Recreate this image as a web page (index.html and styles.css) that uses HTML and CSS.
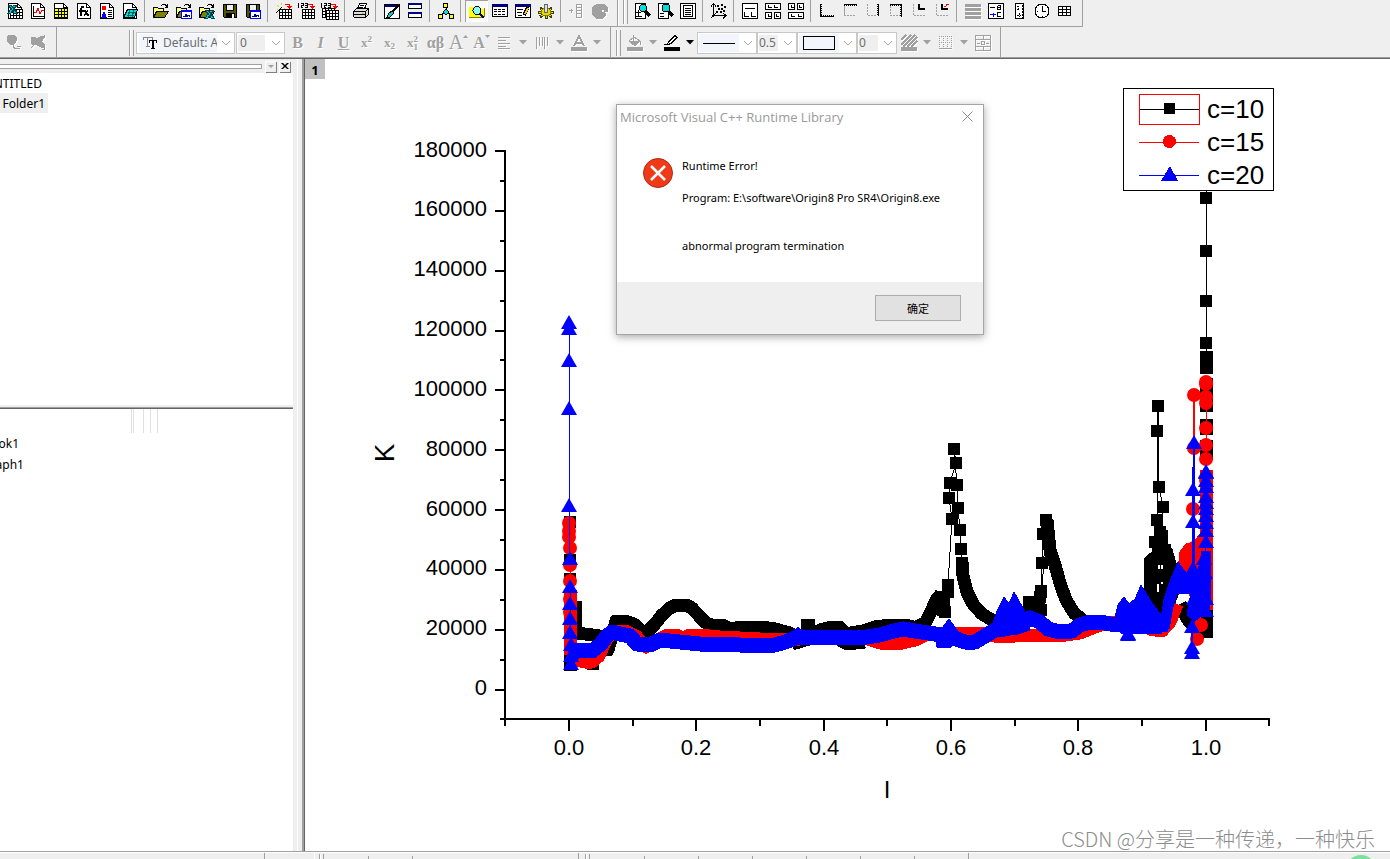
FILE: index.html
```html
<!DOCTYPE html>
<html lang="en">
<head>
<meta charset="utf-8">
<title>Origin 8</title>
<link rel="stylesheet" href="styles.css">
</head>
<body>
<svg class="defs" aria-hidden="true">
  <symbol id="sheet" viewBox="0 0 16 16"><path d="M1.500 .500h9l4 4v11h-13z" fill="#fff"/><path d="M10.500 .500v4h4"/></symbol>
  <symbol id="grid" viewBox="0 0 16 16"><path d="M3.500 6.500h12v9h-12zM3 9.500h12M3 12.500h12M6.500 6v9M9.500 6v9M12.500 6v9" fill="#fff"/></symbol>
  <symbol id="folder" viewBox="0 0 16 16"><path d="M.500 14V4.500h4l1 1h5v3" fill="#ffff80"/><path d="M.500 14.500l3-6h12l-4 6z" fill="#808000"/><path d="M8 2.500l2-1h2l2 2M14.500 1v3h-3"/></symbol>
  <symbol id="disk" viewBox="0 0 16 16"><path d="M1.500 1.500h13v13h-12l-1-1z" fill="#555500"/><path d="M4.500 1.500h7v6h-7z" fill="#efefef"/><path d="M4 10h8v4H4z" fill="#000"/><path d="M10 11h1v3h-1z" fill="#fff" stroke="#fff"/></symbol>
  <symbol id="xl" viewBox="0 0 16 16"><path d="M1 2h3l6 8H7zM7 2h3L4 10H1z" fill="#00d0e0" stroke="#004850"/></symbol>
  <symbol id="wave" viewBox="0 0 16 16"><path d="M5.500 7.500h10v8h-10z" fill="#fff" stroke="#00f"/><path d="M5 8h11" stroke="#00f" stroke-width="2"/><path d="M7 13h2v-2h1v2h1v-1h2v1h1" stroke="#000080"/></symbol>
  <symbol id="down" viewBox="0 0 8 5"><path d="M0 0h8L4 4.500z" fill="currentColor" stroke="none"/></symbol>
  <symbol id="chev" viewBox="0 0 10 6"><path d="M1 1l4 4 4-4" fill="none" stroke="#a8a8a8"/></symbol>
  <symbol id="redarrow" viewBox="0 0 16 16"><path d="M9 1.500h4v2" stroke="red"/><path d="M10 3h6l-3 3z" fill="red" stroke="none"/></symbol>
</svg>

<header class="toolbars">
  <div class="row row-main">
    <div class="bar bar-standard">
      <div class="group">
        <button class="tool" aria-label="New Excel"><svg class="ic" viewBox="0 0 16 16"><use href="#sheet"/><use href="#grid"/><use href="#xl"/></svg></button>
        <button class="tool" aria-label="New Graph"><svg class="ic" viewBox="0 0 16 16"><use href="#sheet"/><path d="M3.500 3v10h10"/><path d="M4 9l2 1 2-5 2 6 2-4 2 1" stroke="red"/></svg></button>
        <button class="tool" aria-label="New Worksheet"><svg class="ic" viewBox="0 0 16 16"><use href="#sheet"/><path d="M1.500 5.500h13v9h-13z" fill="#ff0"/><path d="M2 8.500h12M2 11.500h12M5.500 5v9M8.500 5v9M11.500 5v9"/></svg></button>
        <button class="tool" aria-label="New Function"><svg class="ic" viewBox="0 0 16 16"><use href="#sheet"/><path d="M8 4H6L5 6v7M3 7.500h5" stroke-width="2"/><path d="M8 7l4 6M12 7l-4 6M9 7l4 6"/></svg></button>
        <button class="tool" aria-label="New Layout"><svg class="ic" viewBox="0 0 16 16"><use href="#sheet"/><path d="M3 3h4v4H3z" fill="red" stroke="none"/><path d="M3 14l2-5 2 5z" fill="#00f" stroke="#00f"/><path d="M9 7.500h4M9 9.500h4M9 11.500h4M9 13.500h4"/></svg></button>
        <button class="tool" aria-label="New Notes"><svg class="ic" viewBox="0 0 16 16"><use href="#sheet"/><path d="M5.500 6.500h10l-3 8h-11z" fill="#00e0e0"/><path d="M6 9h8M5 12h7M8 7l-2 7M12 7l-2 7" stroke="#066"/></svg></button>
      </div>
      <div class="group">
        <button class="tool" aria-label="Open"><svg class="ic" viewBox="0 0 16 16"><use href="#folder"/></svg></button>
        <button class="tool" aria-label="Open Template"><svg class="ic" viewBox="0 0 16 16"><use href="#folder"/><use href="#wave"/></svg></button>
        <button class="tool" aria-label="Open Excel"><svg class="ic" viewBox="0 0 16 16"><use href="#folder"/><use href="#xl" x="5" y="5"/></svg></button>
        <button class="tool" aria-label="Save"><svg class="ic" viewBox="0 0 16 16"><use href="#disk"/></svg></button>
        <button class="tool" aria-label="Save Template"><svg class="ic" viewBox="0 0 16 16"><use href="#disk"/><use href="#wave"/></svg></button>
      </div>
      <div class="group">
        <button class="tool" aria-label="Import Wizard"><svg class="ic" viewBox="0 0 16 16"><use href="#grid"/><path d="M0 10l6-6"/><path d="M1 2l2 2M5.500 0v2M1 6h1M8 5h1" stroke="#d8d800"/><use href="#redarrow"/></svg></button>
        <button class="tool" aria-label="Import Single ASCII"><svg class="ic" viewBox="0 0 16 16"><use href="#grid"/><path d="M-.500 0v5M2 .500h2v2h-2v2h2M6 .500h2v4H6M6 2.500h2"/><use href="#redarrow"/></svg></button>
        <button class="tool" aria-label="Import Multiple ASCII"><svg class="ic" viewBox="0 0 16 16"><use href="#grid" x="-3" y="-1"/><use href="#grid" x="1" y="1"/><path d="M-.500 0v5M2 .500h2v2h-2v2h2M6 .500h2v4H6M6 2.500h2"/><use href="#redarrow"/></svg></button>
      </div>
      <div class="group">
        <button class="tool" aria-label="Print"><svg class="ic" viewBox="0 0 16 16"><path d="M4.500 6l2-5.500h7l-2 5.500M7 2.500h4M6 4.500h4" fill="#fff"/><path d="M.500 8.500l3-3h12v6l-3 3h-11l-1-1z" fill="#ddd"/><path d="M.500 8.500h12v6M12.500 8.500l3-3M1 11.500h11"/><path d="M9 10h2" stroke="#cc0"/></svg></button>
      </div>
      <div class="group">
        <button class="tool" aria-label="Duplicate"><svg class="ic" viewBox="0 0 16 16"><path d="M.500 1.500h15v14H.500z" fill="#fff"/><path d="M1 3h13" stroke="#000080" stroke-width="2"/><path d="M15 2L8 9" stroke-width="2"/><path d="M8 8l2 2-4 4H3l2-4z" fill="#0cc"/></svg></button>
        <button class="tool" aria-label="Refresh"><svg class="ic" viewBox="0 0 16 16"><path d="M1.500 .500h13v5h-13zM1.500 9.500h13v5h-13z" fill="#fff"/><path d="M1 1h14M1 10h14" stroke="#000080" stroke-width="2"/></svg></button>
      </div>
      <div class="group">
        <button class="tool" aria-label="Custom Routine"><svg class="ic" viewBox="0 0 16 16"><path d="M8 4v4M8 8l-5 4M8 8l5 4M8 8v4"/><path d="M5.500 .500h4v4h-4zM.500 11.500h4v4h-4zM11.500 11.500h4v4h-4z" fill="#ff0"/><path d="M8 6l3 3-3 3-3-3z" fill="#0dd"/></svg></button>
      </div>
      <div class="group">
        <button class="tool pressed" aria-label="Project Explorer"><svg class="ic" viewBox="0 0 16 16"><path d="M0 14V4h5l1 2h9v8z" fill="#ff0" stroke="none"/><path d="M0 14.500h15M15 5v9" stroke="#808000"/><circle cx="8" cy="7.500" r="4" fill="#8ff"/><path d="M11 11l4 4" stroke="#000080" stroke-width="2"/></svg></button>
        <button class="tool" aria-label="Results Log"><svg class="ic" viewBox="0 0 16 16"><path d="M.500 1.500h15v12H.500z" fill="#fff"/><path d="M0 2h16" stroke="#000080" stroke-width="3"/><path d="M2 6.500h12M2 8.500h12M2 11.500h12" stroke-dasharray="3 1"/></svg></button>
        <button class="tool" aria-label="Command Window"><svg class="ic" viewBox="0 0 16 16"><path d="M.500 1.500h15v13H.500z" fill="#fff"/><path d="M0 2h16" stroke="#000080" stroke-width="3"/><path d="M2 6.500h6M2 9.500h5M3 12.500h4"/><path d="M13 4l-4 8" stroke="#000" stroke-width="4"/><path d="M13 5l-3 6" stroke="#ffd000" stroke-width="2"/></svg></button>
        <button class="tool" aria-label="Code Builder"><svg class="ic" viewBox="0 0 16 16"><path d="M8 3v13M0 9h16M2 5l12 9M14 5L2 14" stroke="#404000" stroke-width="3"/><path d="M8 5v10M1 9h14M3 6l10 7M13 6L3 13" stroke="#e8d800"/><ellipse cx="8" cy="9" rx="5" ry="3.500" fill="#e8d800" stroke="#808000"/><path d="M6.500 1.500h3v8h-3z" fill="#ddd" stroke="#666"/></svg></button>
      </div>
      <div class="group">
        <button class="tool off" aria-label="Add New Column"><svg class="ic" viewBox="0 0 16 16"><path d="M0 7.500h4M2 5.500v4M7.500 1.500h5v13h-5zM8 4.500h4M8 7.500h4M8 10.500h4"/></svg></button>
        <button class="tool off" aria-label="Rotate"><svg class="ic" viewBox="0 0 16 16"><path d="M15 8V4l-3-3H5L0 5v6l4 4h7l2-2v-3l-4-1V6h3v2z" fill="#a0a0a0"/></svg></button>
      </div>
    </div>
    <div class="bar bar-graph">
      <span class="grip"></span>
      <div class="group">
        <button class="tool" aria-label="Zoom In"><svg class="ic" viewBox="0 0 16 16"><path d="M1.500 .500h10v15h-10z" fill="#fff"/><circle cx="9" cy="5" r="3.500" fill="#0dd"/><path d="M11 8l5 5" stroke-width="3"/><path d="M4.500 7v6M2 9.500h5M2 13h6"/></svg></button>
        <button class="tool" aria-label="Zoom Out"><svg class="ic" viewBox="0 0 16 16"><path d="M1.500 .500h10v15h-10z" fill="#fff"/><circle cx="9" cy="5" r="4" fill="#0dd"/><path d="M12 9l4 4" stroke-width="3"/><path d="M3 10.500h4M3 13h4"/></svg></button>
        <button class="tool" aria-label="Whole Page"><svg class="ic" viewBox="0 0 16 16"><path d="M.500 .500h15v15H.500zM3.500 2.500h9v11h-9z" fill="#fff"/><path d="M5 5.500h6M5 7.500h6M5 9.500h6M5 11.500h6"/></svg></button>
      </div>
      <div class="group">
        <button class="tool" aria-label="Rescale"><svg class="ic" viewBox="0 0 16 16"><path d="M2.500 1v13M0 3.500l2.500-3 2.500 3M1 12.500h13M12 10l3 2.500-3 3M0 15l5-5"/><path d="M6 3h2M10 2h2M13 4h2M7 6h2M10 6h2M12 8h2M5 9h2M9 9h2" stroke-width="2"/></svg></button>
      </div>
      <div class="group">
        <button class="tool" aria-label="Two Panels"><svg class="ic" viewBox="0 0 16 16"><path d="M.500 .500h15v15H.500z" fill="#fff"/><path d="M3 5.500h10M2.500 9v4h4M9.500 9v4h4"/></svg></button>
        <button class="tool" aria-label="Four Panels"><svg class="ic" viewBox="0 0 16 16"><path d="M.500 .500h15v6H.500zM.500 9.500h6v6h-6zM9.500 9.500h6v6h-6z" fill="#fff"/><path d="M3.500 2v2h3M9.500 2v2h3M3.500 11v2h2M11.500 11v2h2"/></svg></button>
        <button class="tool" aria-label="Nine Panels"><svg class="ic" viewBox="0 0 16 16"><path d="M.500 .500h6v6h-6zM9.500 .500h6v6h-6zM.500 9.500h15v6H.500z" fill="#fff"/><path d="M3.500 2v2h2M11.500 2v2h2M3.500 11v2h3M10.500 11v2h3"/></svg></button>
      </div>
      <div class="group">
        <button class="tool" aria-label="Bottom-Left Axes"><svg class="ic" viewBox="0 0 16 16"><path d="M2 1v12h13" stroke-width="2" stroke-dasharray="1 1"/><path d="M1.500 1v12.500H15"/></svg></button>
        <button class="tool" aria-label="Top Axis"><svg class="ic" viewBox="0 0 16 16"><path d="M2.500 3v10" stroke="#a0a0a0"/><path d="M2 12.500h11" stroke="#a0a0a0" stroke-dasharray="2 1"/><path d="M2 1.500h13"/><path d="M2 2.500h13" stroke-dasharray="1 1"/></svg></button>
        <button class="tool" aria-label="Right Axis"><svg class="ic" viewBox="0 0 16 16"><path d="M2.500 1v11.500H12" stroke="#a0a0a0" stroke-dasharray="2 1"/><path d="M13.500 1v12"/><path d="M12.500 1v12" stroke-dasharray="1 1"/></svg></button>
        <button class="tool" aria-label="Box Axes"><svg class="ic" viewBox="0 0 16 16"><path d="M2.500 3v9.500H12" stroke="#a0a0a0" stroke-dasharray="2 1"/><path d="M2 1.500h11.500v12"/><path d="M2 2.500h10.500v11" stroke-dasharray="1 1"/></svg></button>
        <button class="tool" aria-label="Inset Axes"><svg class="ic" viewBox="0 0 16 16"><path d="M2.500 1v11.500H15" stroke="#a0a0a0" stroke-dasharray="2 1"/><path d="M8 1v5h6" stroke-width="2"/></svg></button>
        <button class="tool" aria-label="Inset Graph"><svg class="ic" viewBox="0 0 16 16"><path d="M2.500 1v11.500H15" stroke="#a0a0a0" stroke-dasharray="2 1"/><path d="M8 1v5h6" stroke-width="2"/><path d="M10 4l2-1 1-2h2" stroke="red"/></svg></button>
      </div>
      <div class="group">
        <button class="tool off" aria-label="Merge"><svg class="ic" viewBox="0 0 16 16"><path d="M0 2.500h16M0 6.500h16M0 10.500h16M0 14.500h16" stroke-width="3"/></svg></button>
        <button class="tool" aria-label="New Legend"><svg class="ic" viewBox="0 0 16 16"><path d="M.500 .500h15v15H.500z" fill="#fff"/><path d="M2 4.500h5M9.500 2.500h3v2h-3v2h3v-4M9.500 2.500v4M13 9.500H9.500v4H13"/><path d="M2 11.500h6M5 9.500v4" stroke="#00f"/></svg></button>
        <button class="tool" aria-label="Add Color Scale"><svg class="ic" viewBox="0 0 16 16"><path d="M4.500 .500h8v15h-8z" fill="#fff"/><path d="M6 3h3M6 6.500h3M7.500 5v3M6 12h4M8 10v4M11 2v13" stroke-dasharray="2 1"/></svg></button>
        <button class="tool" aria-label="Date and Time"><svg class="ic" viewBox="0 0 16 16"><circle cx="8" cy="8" r="7" fill="#fff"/><path d="M8 3v5h4M3 8.500h1M8 13v1"/></svg></button>
        <button class="tool" aria-label="New Table"><svg class="ic" viewBox="0 0 16 16"><path d="M1.500 3.500h12v9h-12zM1 6.500h12M1 9.500h12M5.500 3v9M9.500 3v9" fill="#fff"/></svg></button>
      </div>
    </div>
  </div>

  <div class="row row-format">
    <div class="bar bar-mask">
      <button class="tool off" aria-label="Mask Points"><svg class="ic" viewBox="0 0 16 16"><path d="M3 0h4l2 2v4L7 9H3L0 6V2z" fill="#a0a0a0"/><path d="M6 9v3l3 2M10 11h4M9 13h4"/></svg></button>
      <button class="tool off" aria-label="Unmask Points"><svg class="ic" viewBox="0 0 16 16"><path d="M1 2h4l2 2 3-2 4-1v2l-3 4 3 2v4l-3-1-4-2-5-1-1-3z" fill="#a0a0a0"/><path d="M1 13l4-4M12 14h3"/></svg></button>
    </div>
    <div class="bar bar-text">
      <span class="grip"></span>
      <label class="combo combo-font"><span class="well"><svg class="ic" viewBox="0 0 16 16"><path d="M0 2.500h9M4.500 2v9M3 11.500h4M.500 2v3M9.500 2v3" stroke="#888"/><path d="M6 5.500h8M9.500 5v9M8 13.500h4M6.500 5v3M13.500 5v3M10.500 5v9"/></svg><select aria-label="Font"><option>Default: Arial</option></select></span><svg class="chev"><use href="#chev"/></svg></label>
      <label class="combo combo-size"><select aria-label="Font size"><option>0</option></select><svg class="chev"><use href="#chev"/></svg></label>
      <button class="tool off glyph bold">B</button>
      <button class="tool off glyph italic">I</button>
      <button class="tool off glyph under">U</button>
      <button class="tool off glyph small">x<sup>2</sup></button>
      <button class="tool off glyph small">x<sub>2</sub></button>
      <button class="tool off glyph small" aria-label="Super-subscript"><span>x</span><span class="stack"><span>2</span><span>1</span></span></button>
      <button class="tool off glyph">αβ</button>
      <button class="tool off glyph big">A<svg class="tip" viewBox="0 0 5 3"><path d="M0 3h5L2.500 0z"/></svg></button>
      <button class="tool off glyph">A<svg class="tip" viewBox="0 0 5 3"><path d="M0 0h5L2.500 3z"/></svg></button>
      <button class="tool off" aria-label="Align"><svg class="ic" viewBox="0 0 16 16"><path d="M1 2.500h12M1 5.500h8M1 8.500h12M1 11.500h8M1 13.500h12"/></svg></button>
      <button class="drop off" aria-label="Align options"><svg><use href="#down"/></svg></button>
      <button class="tool off" aria-label="Spacing"><svg class="ic" viewBox="0 0 16 16"><path d="M2.500 2v12M5.500 2v9M8.500 2v9M10.500 2v12M13.500 2v9"/></svg></button>
      <button class="drop off" aria-label="Spacing options"><svg><use href="#down"/></svg></button>
      <button class="tool off" aria-label="Font color"><svg class="ic" viewBox="0 0 16 16"><path d="M3 11L8 1l5 10M5 8h6" stroke-width="2"/><path d="M0 14h16" stroke-width="4"/></svg></button>
      <button class="drop off" aria-label="Font color options"><svg><use href="#down"/></svg></button>
    </div>
    <div class="bar bar-style">
      <span class="grip"></span>
      <button class="tool off" aria-label="Fill color"><svg class="ic" viewBox="0 0 16 16"><path d="M2 6l5-4 6 4-5 5zM6 0v6M13 6l1 4"/><path d="M3 6h9l-4 4z" fill="#a0a0a0"/><path d="M0 14h16" stroke-width="4"/></svg></button>
      <button class="drop off" aria-label="Fill color options"><svg><use href="#down"/></svg></button>
      <button class="tool" aria-label="Line color"><svg class="ic" viewBox="0 0 16 16"><path d="M0 9.500h3l2-3 6-6 2 2-6 6-3 1" fill="#fff"/><path d="M0 14h16" stroke-width="4"/></svg></button>
      <button class="drop" aria-label="Line color options"><svg><use href="#down"/></svg></button>
      <button class="combo combo-wide" aria-label="Line style" aria-haspopup="listbox"><span class="well"><svg class="sample" viewBox="0 0 34 16"><path d="M1 8.500h32"/></svg></span><svg class="chev"><use href="#chev"/></svg></button>
      <label class="combo combo-narrow"><select aria-label="Line width"><option>0.5</option></select><svg class="chev"><use href="#chev"/></svg></label>
      <button class="combo combo-wide" aria-label="Border style" aria-haspopup="listbox"><span class="well"><svg class="sample" viewBox="0 0 34 16"><path d="M1.500 1.500h31v13h-31z"/></svg></span><svg class="chev"><use href="#chev"/></svg></button>
      <label class="combo combo-narrow"><select aria-label="Pattern"><option>0</option></select><svg class="chev"><use href="#chev"/></svg></label>
      <button class="tool off" aria-label="Fill pattern"><svg class="ic" viewBox="0 0 16 16"><path d="M0 5l5-5M0 10L10 0M2 12L14 0M6 12l10-10M10 12l6-6" stroke-width="2"/><path d="M0 14h16" stroke-width="4"/></svg></button>
      <button class="drop off" aria-label="Fill pattern options"><svg><use href="#down"/></svg></button>
      <button class="tool off" aria-label="Borders"><svg class="ic" viewBox="0 0 16 16"><path d="M1.500 1v12M5.500 1v12M9.500 1v12M13.500 1v12M1 1.500h13M1 7.500h13" stroke-dasharray="1 1"/><path d="M1 13.500h13"/></svg></button>
      <button class="drop off" aria-label="Border options"><svg><use href="#down"/></svg></button>
      <button class="tool off" aria-label="Merge cells"><svg class="ic" viewBox="0 0 16 16"><path d="M.500 .500h15v15H.500zM0 4.500h16M0 11.500h16M8 0v4M8 12v4M2 8h3M11 8h3M6.500 6.500h3v3h-3z"/></svg></button>
    </div>
  </div>
</header>

<main class="workspace">
  <aside class="explorer">
    <section class="tree">
      <div class="caption"><span class="lines"></span><button aria-label="Menu" class="mini off"><svg viewBox="0 0 8 8"><path d="M1 3h6L4 6z"/></svg></button><button aria-label="Close" class="mini"><svg viewBox="0 0 8 8"><path d="M0 1h2l2 2 2-2h2L5 4l3 3H6L4 5 2 7H0l3-3z"/></svg></button></div>
      <div class="item item-root"><span>UNTITLED</span></div>
      <div class="item item-folder"><span>Folder1</span></div>
    </section>
    <section class="files">
      <div class="columns"><i></i><i></i><i></i><i></i><i></i></div>
      <div class="item item-book"><span>Book1</span></div>
      <div class="item item-graph"><span>Graph1</span></div>
    </section>
  </aside>

  <section class="document">
    <svg class="plot" viewBox="305 59 1085 792" preserveAspectRatio="xMinYMin meet" role="img" aria-label="K against I">
      <defs>
        <marker id="sq" viewBox="-7 -7 14 14" markerWidth="14" markerHeight="14" markerUnits="userSpaceOnUse"><path d="M-6-6H6V6H-6z" fill="#000"/></marker>
        <marker id="ci" viewBox="-7 -7 14 14" markerWidth="14" markerHeight="14" markerUnits="userSpaceOnUse"><circle r="7" fill="red"/></marker>
        <marker id="tr" viewBox="-9 -10 18 18" markerWidth="18" markerHeight="18" markerUnits="userSpaceOnUse"><path d="M-8 5H8L0-9z" fill="#00f"/></marker>
      </defs>

      <g class="axes">
        <path d="M505 150V720M504 719H1270"/>
        <path d="M495 151h10M495 211h10M495 271h10M495 331h10M495 390h10M495 450h10M495 510h10M495 570h10M495 630h10M495 690h10"/>
        <path d="M500 181h5M500 241h5M500 301h5M500 360h5M500 420h5M500 480h5M500 540h5M500 600h5M500 660h5M500 719h5"/>
        <path d="M569 719v12M696 719v12M824 719v12M951 719v12M1078 719v12M1206 719v12"/>
        <path d="M505 719v7M633 719v7M760 719v7M887 719v7M1015 719v7M1142 719v7M1269 719v7"/>
      </g>
      <g class="ticks ticks-y">
        <text x="487" y="157">180000</text><text x="487" y="216">160000</text><text x="487" y="276">140000</text><text x="487" y="336">120000</text><text x="487" y="396">100000</text><text x="487" y="456">80000</text><text x="487" y="516">60000</text><text x="487" y="575">40000</text><text x="487" y="635">20000</text><text x="487" y="695">0</text>
      </g>
      <g class="ticks ticks-x">
        <text x="569" y="755">0.0</text><text x="696" y="755">0.2</text><text x="824" y="755">0.4</text><text x="951" y="755">0.6</text><text x="1078" y="755">0.8</text><text x="1206" y="755">1.0</text>
      </g>
      <text class="axis-name" transform="translate(394 453) rotate(-90)">K</text>
      <text class="axis-name axis-i" x="887" y="798">I</text>

      <g class="series black">
        <path class="dense" d="M570 600V671M575 601V633L585 634 600 636 608 642 608 650 616 621 625 621 634 624 640 630 646 633 655 624 662 615 670 608 676 605 686 605 692 608 700 617 706 623 712 625 722 625 731 629 740 627 762 627 775 629 790 633 795 643"/>
        <path class="dense" d="M587 663h12M792 644l20-6 8-8 12-3 8 0 5 7M835 637l12 7 18-2M845 634l18-3 12-4 15-2 15 0 8 2M915 628l10-5 6-11 5-12 5-6M944 591l-1 25M962 562l1 14 4 16 6 12 9 10 10 6 16 10M1029 600v16M1041 592l-3 16M1047 520l3 30 5 15 5 18 6 17 8 13 10 8 10 5"/>
        <path class="dense" d="M1206 351V374M1206 378v34M1206 419v16M1206 440v20M1206 540v98M1180 604l8 16 10 10 8 4"/>
        <path class="blob" d="M1145 558l7-6 3-22 12 0 0 14 5 5 4 14 6 22-12 30-26 0z"/>
        <path class="link squares" d="M570 522V560L570 579M570 598"/>
        <path class="link squares" d="M948 592V585L952 519 949 498 950 483 956 463 954 449 957 485 958 508 960 530 961 549 962 563"/>
        <path class="link squares" d="M945 612L948 592M1029 602L1041 591 1042 563 1043 534 1046 520 1041 610"/>
        <path class="link squares" d="M1150 575L1155 542 1157 520 1157 431 1158 406 1159 487 1163 507 1160 532 1165 550"/>
        <path class="link squares" d="M1206 185V198L1206 251 1206 301 1206 343 1206 360"/>
        <path class="gaps" d="M1159 565v4M1162 565v4M1158 584v8M1162 582v2"/>
        <path class="fill" d="M801 619h13v12h-13z"/>
      </g>

      <g class="series red">
        <path class="dense" d="M570 590V655M576 660L585 662 592 662 599 656 606 640 612 632 625 631 636 636 646 647 660 639 668 635 676 635 683 638 690 635 700 635 720 637 760 639 800 639 840 636 860 636 880 643 898 644 915 640 930 633 960 633 985 634 1000 637 1030 635 1058 636 1080 633 1095 627 1110 622 1140 622 1150 629 1162 631 1170 622 1177 604"/>
        <path class="blob" d="M1178 570l2-18 6-8 8-2 6-8 8-4 3 28-3 40-18-2z"/>
        <path class="dense" d="M1206 470V610"/>
        <path class="link circles" d="M569 523V531L569 537 570 548 570 565 570 581 570 599 570 612"/>
        <path class="link circles wide" d="M1194 548V395L1194 448 1193 509 1194 580 1201 625 1197 639"/>
        <path class="link circles" d="M1206 382V384L1206 397 1206 403 1206 428 1206 445 1206 459 1206 480"/>
      </g>

      <g class="series blue">
        <path class="dense" d="M571 655L578 650 592 651 600 645 606 637 612 632 620 634 630 636 637 644 650 645 660 640 680 642 700 644 740 645 775 645 785 642 798 637 820 637 860 638 880 635 890 632 903 629 915 631 935 634 948 636 965 642 975 642 985 636 995 630 1005 629 1020 625 1030 618 1040 622 1048 629 1060 632 1072 631 1080 625 1090 622 1100 622 1110 624 1125 624 1155 624 1168 624"/>
        <path class="blob" d="M790 634l8-7 8 7zM935 634l8-7 6-8 10 14-8 14h-14zM991 630l6-19 7-14 5 7 5-12 10 18 6 20-15 5zM1114 622l4-17 6-8 5 7 6-5 6-14 11 18 9 12 0 18h-40zM1160 628l4-29 8-23 6-14 8 11 12 -2 4-20h8l1 50 -2 8-14 12-8-6 4-22h-14l-4 14-4 22z"/>
        <path class="link triangles" d="M569 324V330L569 362 569 410 569 507 570 560 570 588 570 605 570 620 570 634 571 646 571 657 571 665"/>
        <path class="link triangles wide" d="M1192 654V649L1192 628 1198 605 1193 570 1193 523 1193 491 1194 444 1194 600 1206 612"/>
        <path class="link triangles" d="M1206 473V474L1206 482 1206 488 1206 498 1206 504 1206 510 1206 517 1206 524 1206 532 1206 543 1204 560 1205 574 1203 588 1206 600"/>
        <path class="link triangles" d="M1128 635V636"/>
      </g>

      <g class="legend">
        <path class="frame" d="M1123.500 88.500h150v102h-150z"/>
        <path d="M1139 109.500h60" stroke="#000"/><path d="M1139 142.500h60" stroke="red"/><path d="M1139 175.500h60" stroke="#00f"/>
        <path d="M1139.500 94.500h60v30h-60z" stroke="red"/>
        <path d="M1164 103h11v11h-11z" fill="#000"/><circle cx="1169.500" cy="141.500" r="6.500" fill="red"/><path d="M1161 181h17l-8-15z" fill="#00f"/>
        <text x="1207" y="118">c=10</text><text x="1207" y="151">c=15</text><text x="1207" y="184">c=20</text>
      </g>
    </svg>
    <span class="layer">1</span>
    <div class="dialog" role="alertdialog" aria-labelledby="dlg-title">
      <div class="dialog-head"><h1 id="dlg-title">Microsoft Visual C++ Runtime Library</h1><button class="dialog-x" aria-label="Close"><svg viewBox="0 0 11 11"><path d="M.500 .500l10 10M10.500 .500l-10 10"/></svg></button></div>
      <div class="dialog-body">
        <svg class="stop" viewBox="0 0 30 30"><circle cx="15" cy="15" r="14.500" fill="#f03a17" stroke="#a82a16"/><path d="M8 8l14 14M22 8L8 22" stroke="#fff" stroke-width="2.500"/></svg>
        <div class="message"><p>Runtime Error!</p><p>Program: E:\software\Origin8 Pro SR4\Origin8.exe</p><p class="last">abnormal program termination</p></div>
      </div>
      <div class="dialog-foot"><button class="ok">确定</button></div>
    </div>
    <p class="watermark">CSDN @分享是一种传递，一种快乐</p>
  </section>
</main>

<footer class="status"><i class="s265"></i><i class="s50 clear"></i><span class="grip"></span><i class="s45"></i><i class="s45"></i><i class="s166 tall"></i><span class="grip"></span><i class="s53"></i><i class="s53"></i><i class="s53"></i><i class="s53"></i><i class="s53"></i><i class="s53"></i><i class="s53 tall"></i><b class="bubble"></b></footer>
</body>
</html>
```
FILE: styles.css
```css
* { box-sizing: border-box; }
body {
  margin: 0;
  height: 100vh;
  display: flex;
  flex-direction: column;
  overflow: hidden;
  background: #efefef;
  color: #000;
  font: 12px "Noto Sans", "Noto Sans CJK SC", sans-serif;
}
button { border: 0; margin: 0; padding: 0; background: none; color: inherit; font: inherit; }
.defs { position: absolute; width: 0; height: 0; }

/* toolbars */
.toolbars { flex: none; border-bottom: 1px solid #646464; box-shadow: inset 0 -1px #a0a0a0; }
.row { display: flex; }
.row-main { height: 27px; }
.row-format { height: 31px; }
.bar { display: flex; align-items: center; border-right: 1px solid #a0a0a0; }
.row-main .bar { border-bottom: 1px solid #a0a0a0; padding-bottom: 4px; }
.bar-standard { padding: 0 6px 0 3px; }
.bar-graph { padding: 0 6px 0 4px; box-shadow: inset 1px 0 #fff; }
.group { display: flex; align-items: center; }
.group + .group { margin-left: 3px; padding-left: 4px; border-left: 1px solid #a0a0a0; }
.tool { width: 23px; height: 22px; flex: none; display: flex; align-items: center; justify-content: center; }
.pressed { background: #f8f8f8; box-shadow: inset 1px 1px #a0a0a0, inset -1px -1px #fff; }
.ic { width: 16px; height: 16px; fill: none; stroke: #000; shape-rendering: crispEdges; overflow: visible; }
.off { color: #a0a0a0; }
.off .ic { stroke: #a0a0a0; filter: drop-shadow(1px 1px #fff); }
.grip { width: 5px; height: 26px; flex: none; margin: 0 2px 0 1px; border: solid #a0a0a0; border-width: 0 1px; background: linear-gradient(90deg, #fff 1px, #efefef 1px); }
.bar-mask { width: 57px; padding-left: 3px; margin-right: 71px; }
.bar-text { padding-right: 6px; }
.bar-style { padding: 0 6px 0 4px; }
.drop { width: 14px; height: 22px; flex: none; display: flex; align-items: center; justify-content: center; }
.drop svg { width: 8px; height: 5px; }
.combo { height: 22px; flex: none; display: flex; align-items: center; justify-content: space-between; padding: 1px 3px 1px 1px; border: 1px solid #c8c8c8; background: #fff; }
.chev { width: 10px; height: 6px; flex: none; }
.combo-font { width: 99px; margin-right: 1px; padding-left: 2px; }
.combo-size { width: 49px; margin-right: 1px; }
.combo-wide { width: 60px; }
.combo-narrow { width: 40px; }
.well { display: flex; align-items: center; justify-content: center; height: 18px; background: #f2f6fc; }
.combo-font .well { width: 78px; padding-left: 4px; gap: 2px; }
.combo-font select { width: 56px; background: none; }
.combo-wide .well { width: 40px; }
.sample { width: 34px; height: 16px; fill: none; stroke: #000; shape-rendering: crispEdges; }
select { appearance: none; border: 0; margin: 0; padding: 0 0 0 2px; height: 16px; background: #efefef; color: #6d6d6d; font: 12px/16px "Noto Sans", sans-serif; overflow: hidden; }
.combo-size select { width: 27px; }
.combo-narrow select { width: 19px; padding: 0; }
.glyph { font: bold 16px "Liberation Serif", serif; text-shadow: 1px 1px #fff; align-items: center; }
.italic { font-style: italic; }
.under { text-decoration: underline; }
.small { font-size: 13px; }
.small sup, .small sub { font-size: 9px; line-height: 9px; }
.small sup { align-self: flex-start; margin-top: 3px; }
.small sub { align-self: flex-end; margin-bottom: 3px; }
.stack { display: flex; flex-direction: column; font-size: 9px; line-height: 8px; }
.big { font-size: 20px; font-weight: normal; }
.tip { width: 5px; height: 3px; align-self: flex-start; margin-top: 3px; fill: #a0a0a0; }

/* panes */
.workspace { flex: 1; min-height: 0; display: flex; }
.explorer { width: 305px; flex: none; display: flex; flex-direction: column; padding-right: 11px; border-right: 1px solid #646464; box-shadow: inset -2px 0 #a0a0a0, inset -6px 0 #efefef, inset -7px 0 #fff; }
.tree { height: 349px; flex: none; background: #fff; border-bottom: 3px solid #efefef; }
.files { flex: 1; background: #fff; border-top: 1px solid #646464; box-shadow: 0 -1px #a0a0a0; }
.caption { display: flex; align-items: center; gap: 3px; height: 14px; padding-right: 3px; background: #efefef; }
.lines { flex: 1; height: 5px; border: solid #a0a0a0; border-width: 1px 1px 1px 0; background: #fff; }
.mini { width: 11px; height: 11px; flex: none; display: flex; align-items: center; justify-content: center; background: #efefef; box-shadow: inset 1px 1px #fff, 1px 1px #808080; }
.mini svg { width: 8px; height: 8px; fill: currentColor; }
.item { display: flex; justify-content: flex-end; align-items: center; height: 20px; overflow: hidden; white-space: nowrap; }
.item-root { width: 42px; }
.item-folder { width: 48px; padding-right: 3px; background: #efefef; }
.item-book { width: 19px; }
.item-graph { width: 24px; }
.columns { display: flex; gap: 6px; height: 24px; padding-left: 131px; }
.columns i { border-left: 1px solid #e0e0e0; }
.columns i:first-child { margin-right: -5px; }
.columns i:nth-child(2) { margin-right: 3px; }
.files .item { height: 21px; }

/* graph window */
.document { position: relative; flex: 1; min-width: 0; background: #fff; }
.layer { position: absolute; left: 0; top: 0; width: 20px; height: 20px; background: #c0c0c0; font: bold 13px/22px "Open Sans", sans-serif; text-align: center; }
.plot { display: block; width: 100%; height: 100%; font-family: "Liberation Sans", Arial, sans-serif; }
.axes { stroke: #000; stroke-width: 2; shape-rendering: crispEdges; }
.ticks { font-size: 22px; }
.ticks-y { text-anchor: end; }
.ticks-x { text-anchor: middle; }
.axis-name { font-size: 28px; text-anchor: middle; }
.axis-i { font-size: 24px; }
.series { fill: none; shape-rendering: crispEdges; }
.black { stroke: #000; }
.red { stroke: #f00; }
.blue { stroke: #00f; }
.dense { stroke-width: 13px; stroke-linejoin: round; }
.blue .dense { stroke-width: 15px; }
.blob { stroke-width: 1px; }
.black .blob, .black .fill { fill: #000; }
.red .blob { fill: #f00; }
.blue .blob { fill: #00f; }
.link { stroke-width: 1px; }
.wide { stroke-width: 2px; }
.squares { marker: url(#sq); }
.circles { marker: url(#ci); }
.triangles { marker: url(#tr); }
.gaps { stroke: #fff; stroke-width: 2px; }
.legend { fill: none; shape-rendering: crispEdges; }
.legend .frame { fill: #fff; stroke: #000; }
.legend text { fill: #000; font-size: 26px; }
.watermark { position: absolute; right: 15px; bottom: 0; margin: 0; color: #8c8c8c; font: 300 20px/24px "Noto Sans CJK SC", sans-serif; white-space: nowrap; }

/* error dialog */
.dialog { position: absolute; left: 311px; top: 45px; width: 368px; background: #fff; border: 1px solid #a5a5a5; box-shadow: 0 2px 8px rgba(0, 0, 0, .35); }
.dialog-head { display: flex; justify-content: space-between; align-items: center; height: 23px; padding: 0 10px 0 3px; }
.dialog-head h1 { margin: 0; color: #9a9a9a; font: 13px "Open Sans", sans-serif; }
.dialog-x { width: 11px; height: 11px; display: flex; }
.dialog-x svg { width: 11px; height: 11px; fill: none; stroke: #8c8c8c; }
.dialog-body { display: flex; gap: 9px; padding: 30px 26px 28px; }
.stop { width: 30px; height: 30px; flex: none; fill: none; }
.message { font: 11px/16px "Noto Sans", sans-serif; white-space: nowrap; }
.message p { margin: 0 0 16px; }
.message .last { margin: 32px 0 0; }
.dialog-foot { display: flex; justify-content: flex-end; height: 52px; padding: 13px 22px; background: #efefef; }
.ok { width: 86px; height: 26px; border: 1px solid #adadad; background: #e1e1e1; font: 11px "Noto Sans CJK SC", sans-serif; }

/* status */
.status { position: relative; flex: none; display: flex; height: 8px; overflow: hidden; border-top: 1px solid #a0a0a0; box-shadow: inset 0 1px #fff; }
.status i { flex: none; margin-top: 4px; border-right: 1px solid #a0a0a0; }
.status .grip { margin: 2px 1px 0 4px; }
.status .tall + .grip { margin-left: 6px; }
.status .s265, .status .tall { margin-top: 1px; }
.status .clear { border-color: #fff; margin-top: 1px; }
.s265 { width: 265px; }
.s50 { width: 50px; }
.s45 { width: 44px; }
.s166 { width: 166px; }
.s53 { width: 54px; }
.bubble { position: absolute; right: 14px; top: 3px; width: 30px; height: 30px; border-radius: 50%; background: #7be09a; }
```
